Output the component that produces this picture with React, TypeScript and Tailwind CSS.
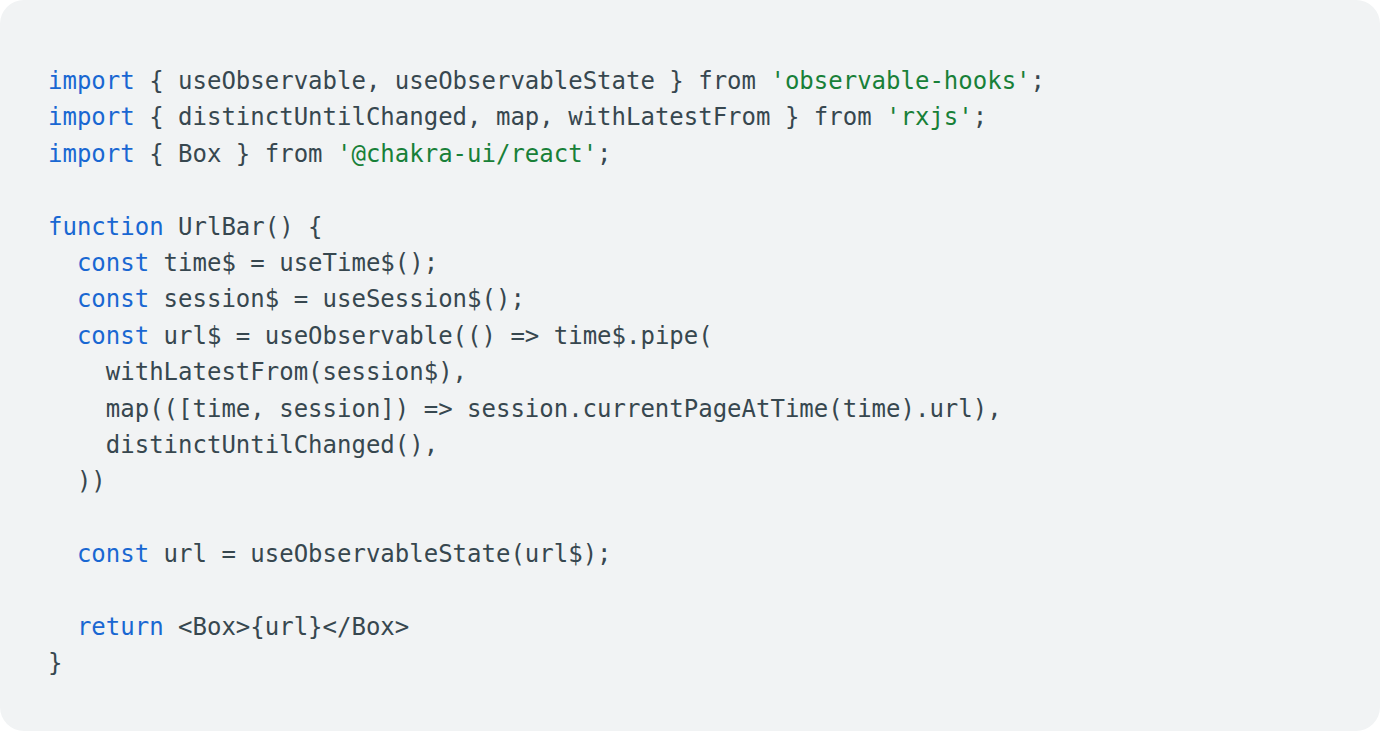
const lines: [string, string][][] = [
  [['k', 'import'], ['t', ' { useObservable, useObservableState } from '], ['s', "'observable-hooks'"], ['t', ';']],
  [['k', 'import'], ['t', ' { distinctUntilChanged, map, withLatestFrom } from '], ['s', "'rxjs'"], ['t', ';']],
  [['k', 'import'], ['t', ' { Box } from '], ['s', "'@chakra-ui/react'"], ['t', ';']],
  [],
  [['k', 'function'], ['t', ' UrlBar() {']],
  [['t', '  '], ['k', 'const'], ['t', ' time$ = useTime$();']],
  [['t', '  '], ['k', 'const'], ['t', ' session$ = useSession$();']],
  [['t', '  '], ['k', 'const'], ['t', ' url$ = useObservable(() => time$.pipe(']],
  [['t', '    withLatestFrom(session$),']],
  [['t', '    map(([time, session]) => session.currentPageAtTime(time).url),']],
  [['t', '    distinctUntilChanged(),']],
  [['t', '  ))']],
  [],
  [['t', '  '], ['k', 'const'], ['t', ' url = useObservableState(url$);']],
  [],
  [['t', '  '], ['k', 'return'], ['t', ' <Box>{url}</Box>']],
  [['t', '}']],
];

const tone: Record<string, string> = {
  k: 'text-[#1967d2]',
  s: 'text-[#188038]',
  t: 'text-[#37474f]',
};

export default function App() {
  return (
    <div className="h-[731px] w-[1380px] bg-white">
      <div className="h-full w-full rounded-[24px] bg-[#f1f3f4] px-[48px] pt-[63px]">
        <pre className="font-['DejaVu_Sans_Mono','Liberation_Mono',monospace] text-[24px] leading-[36.4px]">
          {lines.map((line, i) => (
            <div key={i} className="h-[36.4px] whitespace-pre">
              {line.map(([kind, text], j) => (
                <span key={j} className={tone[kind]}>
                  {text}
                </span>
              ))}
            </div>
          ))}
        </pre>
      </div>
    </div>
  );
}
